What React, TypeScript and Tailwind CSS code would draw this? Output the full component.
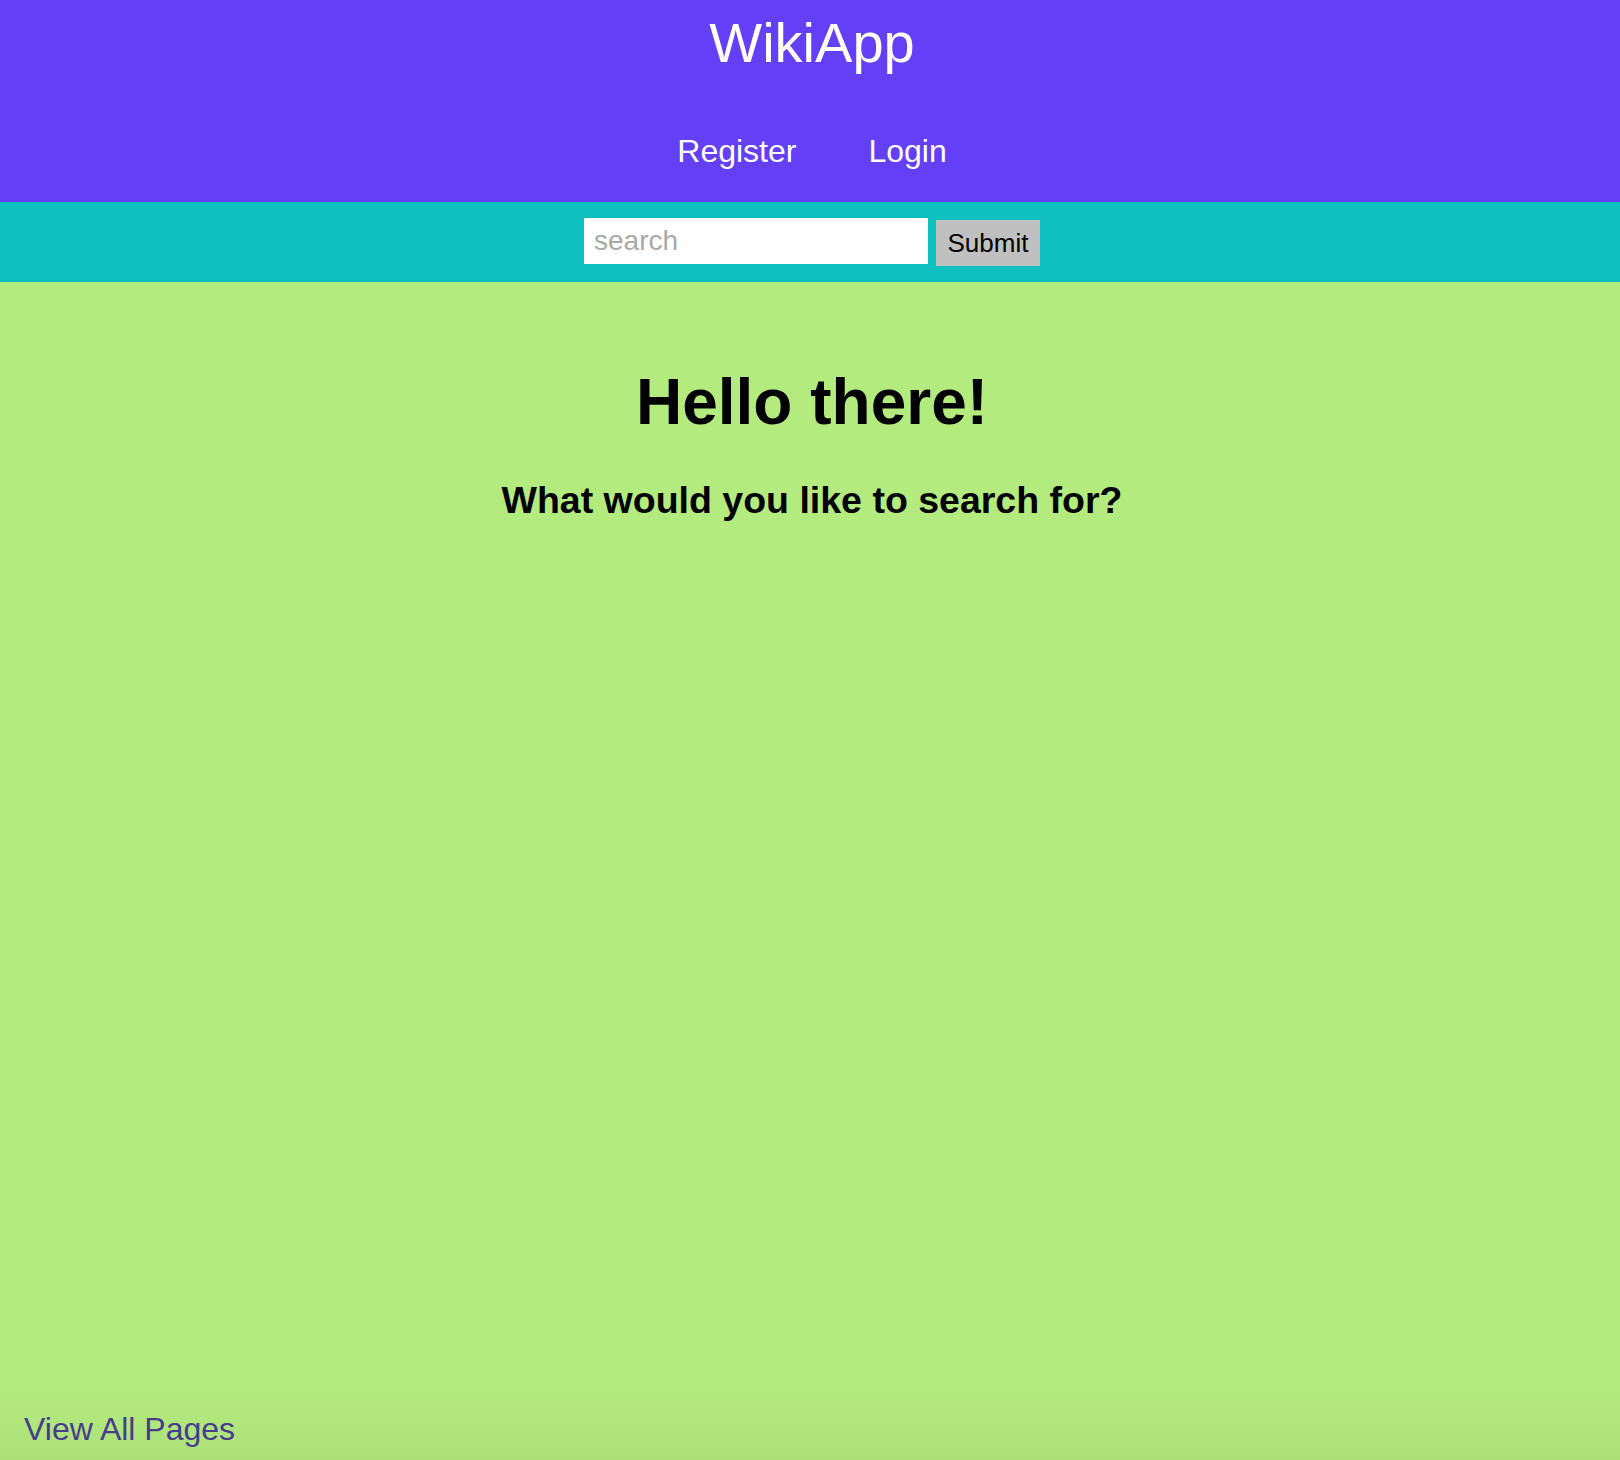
import React from "react";

export default function App() {
  return (
    <div className="min-h-[1460px] flex flex-col bg-[#b4eb7e] font-['Liberation_Sans',Arial,sans-serif]">
      {/* Header */}
      <header className="h-[202px] pl-1 bg-[#633ff6] text-white flex flex-col items-center">
        <h1 className="mt-[15px] text-[56px] leading-[56px]">WikiApp</h1>
        <nav className="mt-[64px] flex justify-center gap-[72px] text-[32px] leading-[32px]">
          <a href="#">Register</a>
          <a href="#">Login</a>
        </nav>
      </header>

      {/* Search bar */}
      <div className="h-[80px] pt-4 pl-1 bg-[#0fc0c1] flex items-start justify-center gap-2">
        <input
          type="text"
          placeholder="search"
          className="w-[344px] h-[46px] bg-white px-[10px] text-[28px] text-black placeholder:text-[#a9a9a9] outline-none"
        />
        <button className="w-[104px] h-[46px] mt-[2px] bg-[#c0c0c0] text-[26px] text-black">
          Submit
        </button>
      </div>

      {/* Main */}
      <main className="flex-1 pt-[88px] pl-1 text-center text-black">
        <h2 className="text-[64px] leading-[64px] font-bold">Hello there!</h2>
        <h3 className="mt-[48px] text-[37.5px] leading-[37px] font-bold">What would you like to search for?</h3>
      </main>

      {/* Footer */}
      <footer className="h-[75px] flex items-end pb-[15px] px-6 bg-gradient-to-b from-[#b4eb7e] to-[#ace17a]">
        <a href="#" className="text-[32px] leading-[32px] text-[#483d8b]">View All Pages</a>
      </footer>
    </div>
  );
}
